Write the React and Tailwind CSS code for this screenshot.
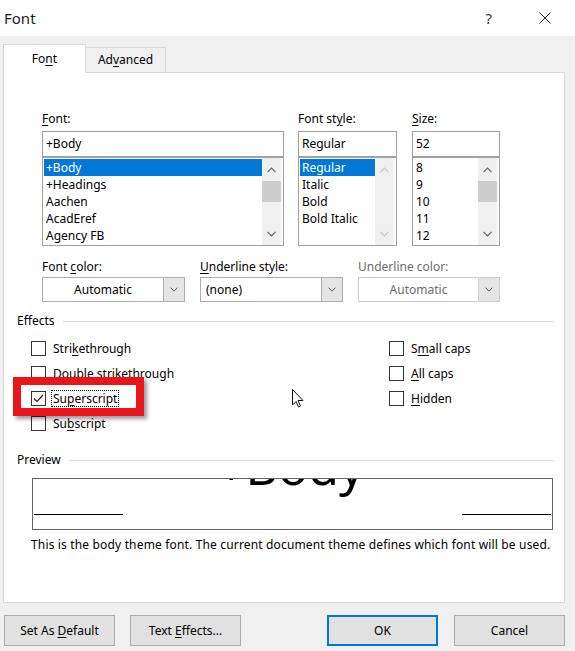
import React from "react";

const U = ({ children }) => (
  <span className="underline underline-offset-[2px] decoration-1">{children}</span>
);

const Chevron = ({ up = false, disabled = false, small = false }) => (
  <svg width={small ? 8 : 9} height={small ? 5 : 6} viewBox="0 0 9 6">
    <path
      d={up ? "M0.5 5.2 L4.5 1 L8.5 5.2" : "M0.5 0.8 L4.5 5 L8.5 0.8"}
      fill="none"
      stroke={disabled ? "#c8c8c8" : "#606060"}
      strokeWidth="1.2"
    />
  </svg>
);

const Label = ({ children, className = "" }) => (
  <div className={`h-[16px] leading-[16px] ${className}`}>{children}</div>
);

const ListBox = ({ items, disabled = false, noSelection = false }) => (
  <div className="h-[89px] border border-[#a0a0a0] bg-white flex">
    <div className="flex-1 pt-px pl-px">
      {items.map((item, i) => (
        <div
          key={item}
          className={`h-[17px] leading-[17px] px-[2px] ${
            i === 0 && !noSelection ? "bg-[#0078d7] text-white" : ""
          }`}
        >
          {item}
        </div>
      ))}
    </div>
    <div className="w-[19px] mr-[2px] bg-[#f0f0f0] flex flex-col">
      <div className="h-[23px] flex items-center justify-center">
        <Chevron up disabled={disabled} />
      </div>
      {!disabled && <div className="h-[21px] bg-[#cdcdcd]" />}
      <div className="flex-1" />
      <div className="h-[22px] flex items-center justify-center">
        <Chevron disabled={disabled} />
      </div>
    </div>
  </div>
);

const Dropdown = ({ text, center = false, disabled = false }) => (
  <div
    className={`h-[25px] border bg-white flex ${
      disabled ? "border-[#cccccc]" : "border-[#adadad]"
    }`}
  >
    <div
      className={`flex-1 flex items-center ${center ? "justify-center" : "pl-[5px]"} ${
        disabled ? "text-[#6d6d6d]" : ""
      }`}
    >
      {text}
    </div>
    <div
      className={`w-[21px] bg-[#e5e5e5] border-l flex items-center justify-center ${
        disabled ? "border-[#cccccc]" : "border-[#adadad]"
      }`}
    >
      <Chevron small />
    </div>
  </div>
);

const Check = ({ checked = false, children, focus = false }) => (
  <div className="h-[25px] flex items-center">
    <div className="w-[15px] h-[15px] border border-[#333333] bg-white flex items-center justify-center">
      {checked && (
        <svg width="11" height="9" viewBox="0 0 11 9">
          <path d="M1 4.5 L4 7.5 L10 1" fill="none" stroke="#222" strokeWidth="1.2" />
        </svg>
      )}
    </div>
    <div
      className={`ml-[5px] px-px leading-[15px] ${
        focus ? "border border-dotted border-black" : "border border-transparent"
      }`}
    >
      {children}
    </div>
  </div>
);

const Button = ({ children, primary = false, className = "" }) => (
  <div
    className={`w-[111px] h-[31px] bg-[#e1e1e1] flex items-center justify-center ${
      primary ? "border-2 border-[#0078d7]" : "border border-[#adadad]"
    } ${className}`}
  >
    <span>{children}</span>
  </div>
);

export default function App() {
  return (
    <div className="relative w-[575px] h-[651px] bg-[#f0f0f0] flex flex-col text-[12px] text-black font-['Noto_Sans','Open_Sans',sans-serif] overflow-hidden">
      {/* title bar */}
      <div className="h-[36px] bg-white flex items-center pl-[4px]">
        <span className="text-[15px] text-[#1a1a1a]">Font</span>
        <span className="ml-auto mr-[47px] text-[15px] text-[#333]">?</span>
        <svg width="12" height="12" viewBox="0 0 12 12" className="mr-[24px]">
          <path d="M0.5 0.5 L11.5 11.5 M11.5 0.5 L0.5 11.5" stroke="#222" strokeWidth="1" />
        </svg>
      </div>

      {/* tabs */}
      <div className="mt-[8px] ml-[3px] flex items-end h-[28px]">
        <div className="w-[83px] h-[29px] -mb-px bg-white border border-b-0 border-[#d9d9d9] flex items-center justify-center relative z-10">
          <span>Fo<U>n</U>t</span>
        </div>
        <div className="w-[80px] h-[25px] bg-[#f0f0f0] border border-l-0 border-b-0 border-[#d9d9d9] flex items-center justify-center">
          <span>Ad<U>v</U>anced</span>
        </div>
      </div>

      {/* panel */}
      <div className="ml-[3px] w-[562px] h-[531px] bg-white border border-[#d9d9d9] flex flex-col">
        {/* font / style / size */}
        <div className="mt-[38px] pl-[38px] flex">
          <div className="w-[242px]">
            <Label><U>F</U>ont:</Label>
            <div className="mt-[4px] h-[26px] border border-[#a0a0a0] flex items-center pl-[3px]">+Body</div>
            <ListBox items={["+Body", "+Headings", "Aachen", "AcadEref", "Agency FB"]} />
          </div>
          <div className="w-[99px] ml-[14px]">
            <Label>Font st<U>y</U>le:</Label>
            <div className="mt-[4px] h-[26px] border border-[#a0a0a0] flex items-center pl-[3px]">Regular</div>
            <ListBox items={["Regular", "Italic", "Bold", "Bold Italic"]} disabled />
          </div>
          <div className="w-[88px] ml-[15px]">
            <Label><U>S</U>ize:</Label>
            <div className="mt-[4px] h-[26px] border border-[#a0a0a0] flex items-center pl-[3px]">52</div>
            <ListBox items={["8", "9", "10", "11", "12"]} noSelection />
          </div>
        </div>

        {/* color / underline */}
        <div className="mt-[13px] pl-[38px] flex">
          <div className="w-[143px]">
            <Label>Font <U>c</U>olor:</Label>
            <div className="mt-[2px]"><Dropdown text="Automatic" center /></div>
          </div>
          <div className="w-[143px] ml-[15px]">
            <Label><U>U</U>nderline style:</Label>
            <div className="mt-[2px]"><Dropdown text="(none)" /></div>
          </div>
          <div className="w-[142px] ml-[15px]">
            <Label className="text-[#6d6d6d]">Underline color:</Label>
            <div className="mt-[2px]"><Dropdown text="Automatic" center disabled /></div>
          </div>
        </div>

        {/* effects */}
        <div className="mt-[11px] pl-[13px] pr-[10px] flex items-center">
          <Label>Effects</Label>
          <div className="flex-1 ml-[8px] h-px bg-[#dcdcdc]" />
        </div>
        <div className="mt-[7px] pl-[27px] flex">
          <div className="w-[358px] flex flex-col">
            <Check>Stri<U>k</U>ethrough</Check>
            <Check>Double strikethrough</Check>
            <Check checked focus>Su<U>p</U>erscript</Check>
            <Check>Su<U>b</U>script</Check>
          </div>
          <div className="flex flex-col">
            <Check>S<U>m</U>all caps</Check>
            <Check><U>A</U>ll caps</Check>
            <Check><U>H</U>idden</Check>
          </div>
        </div>

        {/* preview */}
        <div className="mt-[16px] pl-[13px] pr-[10px] flex items-center">
          <Label>Preview</Label>
          <div className="flex-1 ml-[8px] h-px bg-[#dcdcdc]" />
        </div>
        <div className="mt-[10px] ml-[28px] w-[521px] h-[52px] border border-[#646464] relative overflow-hidden flex items-end justify-between px-px pb-[14px]">
          <span className="absolute left-[184px] top-[-38px] text-[50px] leading-[50px] whitespace-nowrap">+Body</span>
          <div className="w-[89px] h-px bg-black" />
          <div className="w-[89px] h-px bg-black" />
        </div>
        <div className="mt-[7px] ml-[27px] h-[16px] leading-[16px] tracking-[0.16px]">
          This is the body theme font. The current document theme defines which font will be used.
        </div>
      </div>

      {/* buttons */}
      <div className="mt-[12px] flex">
        <Button className="ml-[4px]">Set As <U>D</U>efault</Button>
        <Button className="ml-[15px]">Text <U>E</U>ffects...</Button>
        <Button primary className="ml-[86px]">OK</Button>
        <Button className="ml-[16px]">Cancel</Button>
      </div>

      {/* red annotation */}
      <div className="absolute left-[13px] top-[377px] w-[131px] h-[39px] border-[8px] border-[#e8161b] shadow-[3px_3px_4px_rgba(0,0,0,0.4)]" />

      {/* mouse pointer */}
      <svg className="absolute left-[292px] top-[389px]" width="12" height="19" viewBox="0 0 12 19">
        <path d="M0.5 0.5 L0.5 16 L4 12.5 L6.5 18 L8.5 17 L6 11.5 L11 11.5 Z" fill="white" stroke="#111" strokeWidth="1" strokeLinejoin="round" />
      </svg>
    </div>
  );
}
